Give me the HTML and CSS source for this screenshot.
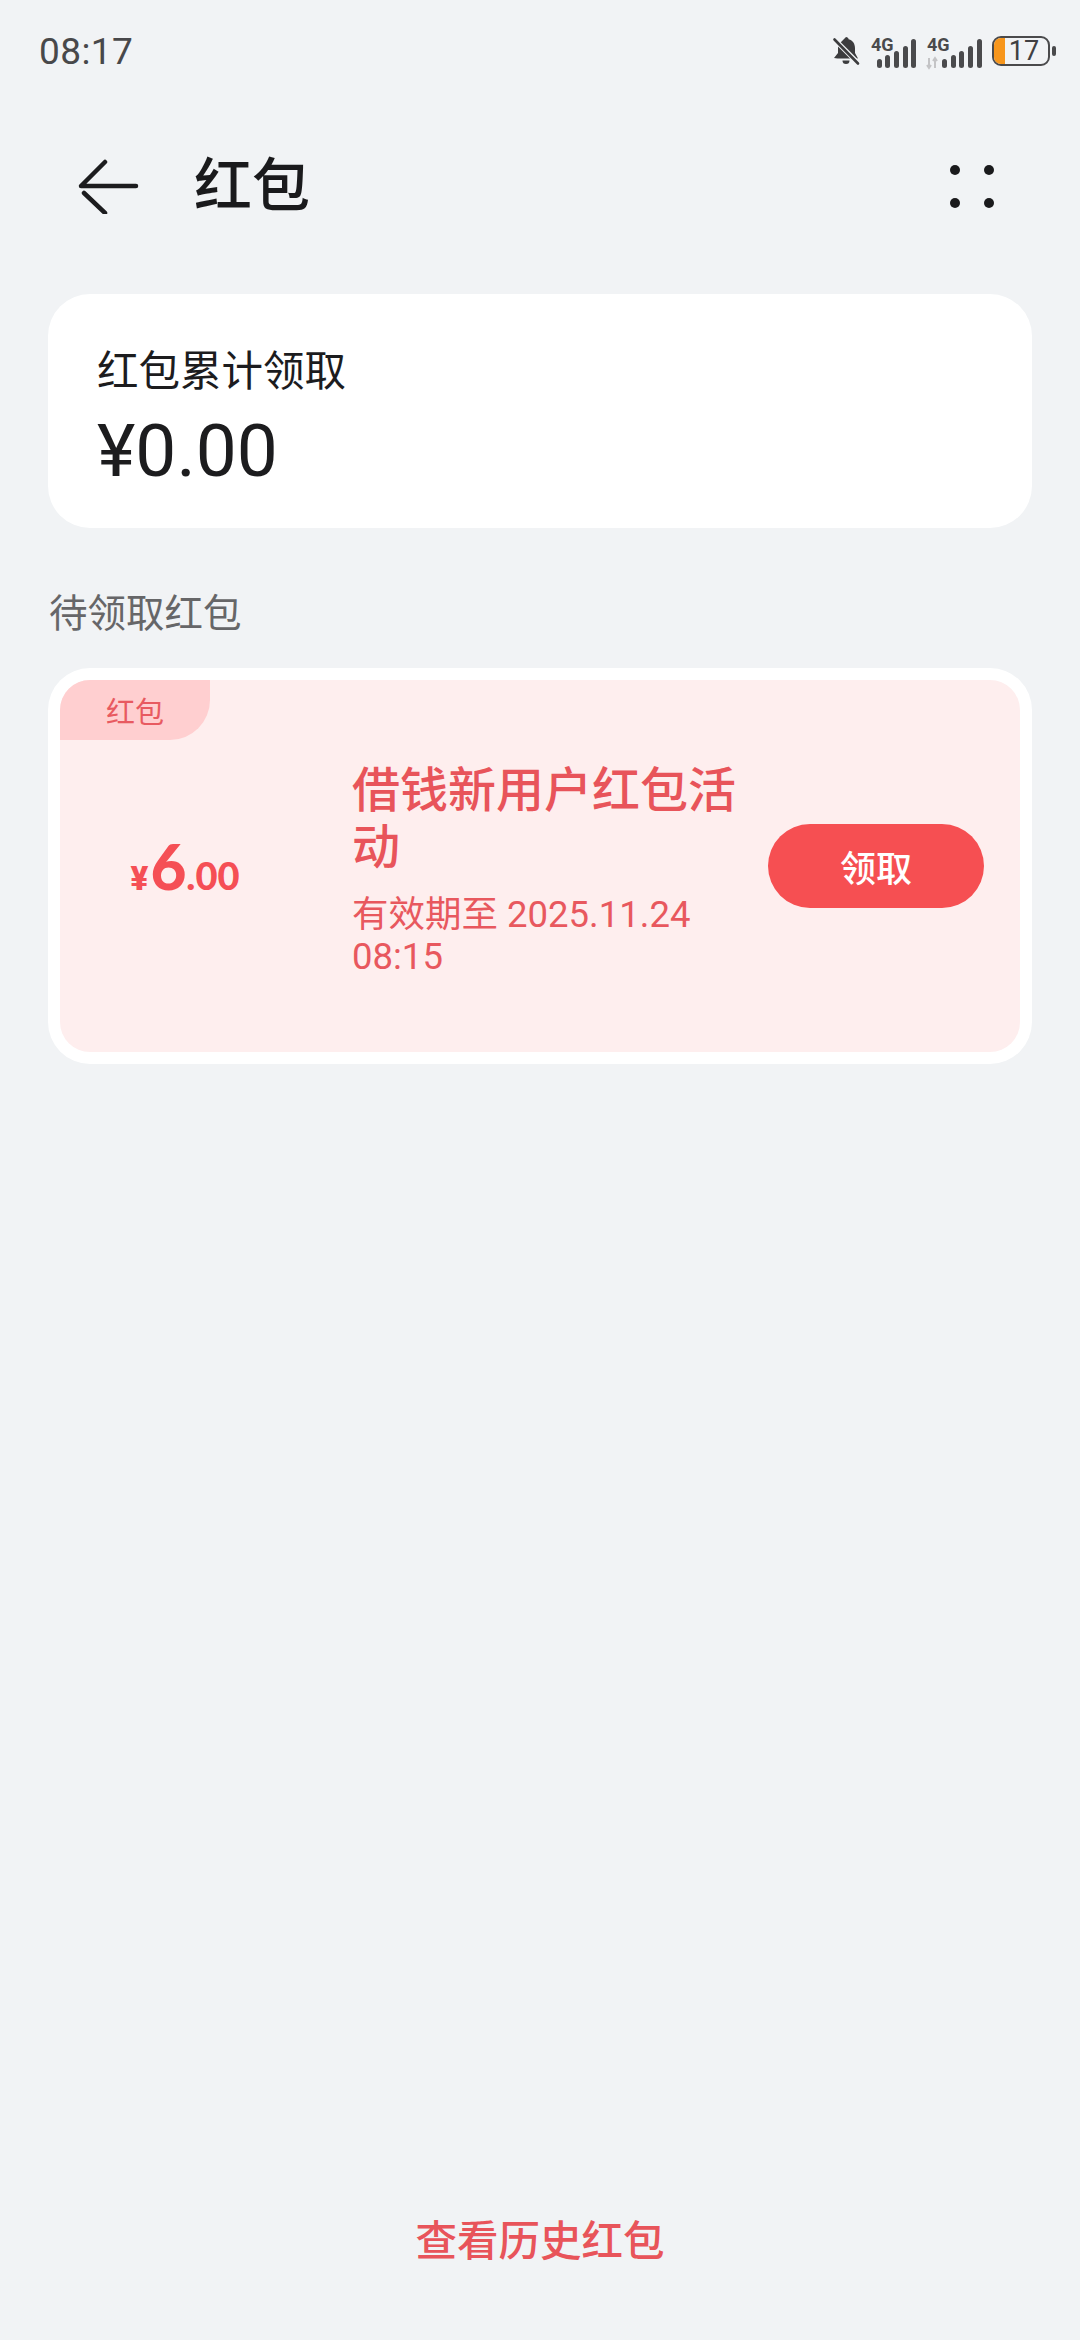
FILE: index.html
```html
<!DOCTYPE html>
<html lang="zh">
<head>
<meta charset="utf-8">
<title>红包</title>
<link rel="stylesheet" href="styles.css">
</head>
<body>
<div class="page">
  <div class="status">
    <span class="time">08:17</span>
    <div class="status-icons">
      <svg class="bell" width="30" height="30" viewBox="0 0 30 30">
        <path d="M15 1c1.500 0 2.400 1 2.600 2.200C22 4.400 24 8 24 12v5l3 5.500H6.500L3 22l4-5v-5c0-1.200.2-2.400.6-3.500z" fill="#3c3c3e"/>
        <path d="M11.500 24.500h7a3.500 3.500 0 0 1-7 0z" fill="#3c3c3e"/>
        <path d="M3 3l24 24" stroke="#f1f3f5" stroke-width="5"/>
        <path d="M3.500 3.500l23.500 24" stroke="#3c3c3e" stroke-width="2.600" stroke-linecap="round"/>
      </svg>
      <svg class="sig" width="45" height="38" viewBox="0 -5 45 38">
        <text x="0" y="14" class="net">4G</text>
        <g fill="#4a4a4c"><rect x="6" y="22" width="5" height="9" rx="2.500"/><rect x="14" y="18" width="5" height="13" rx="2.500"/><rect x="23" y="14" width="5" height="17" rx="2.500"/><rect x="32" y="9" width="5" height="22" rx="2.500"/><rect x="40" y="2" width="5" height="29" rx="2.500"/></g>
      </svg>
      <svg class="sig" width="56" height="38" viewBox="0 -5 56 38">
        <text x="1" y="14" class="net">4G</text>
        <path d="M3 21v10M1 28l2 3 2-3M9 31V21M7 24l2-3 2 3" stroke="#c4c4c6" stroke-width="2" fill="none"/>
        <g fill="#4a4a4c"><rect x="16" y="22" width="5" height="9" rx="2.500"/><rect x="25" y="18" width="5" height="13" rx="2.500"/><rect x="33" y="14" width="5" height="17" rx="2.500"/><rect x="42" y="9" width="5" height="22" rx="2.500"/><rect x="51" y="2" width="5" height="29" rx="2.500"/></g>
      </svg>
      <div class="battery">
        <div class="battery-body"><span class="battery-fill"></span><span class="battery-num">17</span></div>
        <span class="battery-nub"></span>
      </div>
    </div>
  </div>

  <header class="nav">
    <svg class="back" width="62" height="56" viewBox="0 0 62 56">
      <path d="M59 28H4L28 4M7 35l21 20" stroke="#1c1c1e" stroke-width="4.500" fill="none" stroke-linecap="round" stroke-linejoin="round"/>
    </svg>
    <h1 class="title">红包</h1>
    <div class="dots"><i></i><i></i><i></i><i></i></div>
  </header>

  <section class="summary">
    <div class="summary-label">红包累计领取</div>
    <div class="summary-value">¥0.00</div>
  </section>

  <div class="section-title">待领取红包</div>

  <section class="packet">
    <div class="packet-inner">
      <span class="tag">红包</span>
      <div class="amount"><span class="cur">¥</span><span class="int">6</span><span class="dec">.00</span></div>
      <div class="info">
        <div class="info-title">借钱新用户红包活动</div>
        <div class="info-date">有效期至 2025.11.24 08:15</div>
      </div>
      <button class="claim">领取</button>
    </div>
  </section>

  <footer class="history">查看历史红包</footer>
</div>
</body>
</html>
```

FILE: styles.css
```css
* { box-sizing: border-box; }
html, body { margin: 0; padding: 0; }
body {
  width: 1080px;
  height: 2340px;
  background: #f1f3f5;
  font-family: Roboto, "Noto Sans CJK SC", sans-serif;
  overflow: hidden;
}
.page {
  height: 2340px;
  display: flex;
  flex-direction: column;
}
.status {
  height: 102px;
  padding: 0 24px 0 39px;
  display: flex;
  align-items: center;
  justify-content: space-between;
}
.time { font-size: 37px; color: #48484a; letter-spacing: 0.4px; }
.status-icons { display: flex; align-items: center; }
.bell { margin-right: 10px; }
.sig { margin-right: 10px; }
.net { font: 700 18px Roboto, sans-serif; fill: #4a4a4c; }
.battery { display: flex; align-items: center; gap: 2px; }
.battery-body {
  width: 58px;
  height: 30px;
  border: 2px solid #4a4a4c;
  border-radius: 9px;
  position: relative;
  display: flex;
  align-items: center;
  justify-content: center;
  overflow: hidden;
  padding-left: 6px;
}
.battery-fill { position: absolute; left: 0; top: 0; bottom: 0; width: 11px; background: #f7961c; }
.battery-num { font-size: 27px; color: #404042; line-height: 26px; }
.battery-nub { width: 4px; height: 10px; border-radius: 2px; background: #4a4a4c; }

.nav {
  height: 168px;
  padding: 0 0 0 77px;
  display: flex;
  align-items: center;
}
.title {
  margin: 0 0 0 55px;
  font-size: 58px;
  font-weight: 500;
  color: #1a1a1c;
  line-height: 70px;
}
.dots {
  margin-left: auto;
  margin-right: 86px;
  width: 44px;
  display: grid;
  grid-template-columns: 10px 10px;
  justify-content: space-between;
  row-gap: 23px;
}
.dots i { width: 10px; height: 10px; border-radius: 50%; background: #1a1a1c; }

.summary {
  margin: 24px 48px 0;
  height: 234px;
  padding: 50px 50px 0 49px;
  background: #fff;
  border-radius: 42px;
}
.summary-label { font-size: 41.500px; line-height: 56px; color: #1c1c1e; }
.summary-value { font-size: 73px; line-height: 90px; color: #1c1c1e; margin-top: 6px; }

.section-title {
  margin: 61px 48px 0 49px;
  font-size: 38.500px;
  line-height: 50px;
  color: #666668;
}

.packet {
  margin: 29px 48px 0;
  height: 396px;
  padding: 12px;
  background: #fff;
  border-radius: 42px;
}
.packet-inner {
  position: relative;
  height: 100%;
  display: flex;
  align-items: center;
  padding-right: 36px;
  background: #feeeee;
  border-radius: 30px;
  overflow: hidden;
}
.tag {
  position: absolute;
  left: 0;
  top: 0;
  width: 150px;
  height: 60px;
  display: flex;
  align-items: center;
  justify-content: center;
  background: #ffcfd0;
  border-bottom-right-radius: 40px;
  font-size: 29px;
  color: #e85a60;
}
.amount {
  width: 250px;
  flex: none;
  display: flex;
  align-items: baseline;
  justify-content: center;
  color: #f54f55;
  font-family: Lato, sans-serif;
  font-weight: 900;
  line-height: 1;
}
.cur { font-family: Roboto, sans-serif; font-size: 33px; margin-right: 2px; }
.int { font-size: 62px; }
.dec { font-size: 38px; }
.info {
  width: 416px;
  flex: none;
  margin-left: 42px;
  padding: 8px 16px 0 0;
}
.info-title {
  font-size: 48px;
  line-height: 57px;
  font-weight: 500;
  color: #e8545a;
}
.info-date {
  margin-top: 18px;
  font-size: 36.500px;
  line-height: 42px;
  color: #e8585e;
}
.claim {
  width: 216px;
  height: 84px;
  flex: none;
  margin-left: auto;
  padding: 0;
  border: 0;
  border-radius: 42px;
  background: #f64f52;
  color: #fff;
  font-family: inherit;
  font-size: 36px;
  font-weight: 500;
}
.history {
  margin-top: auto;
  margin-bottom: 73px;
  text-align: center;
  font-size: 41.500px;
  line-height: 50px;
  font-weight: 500;
  color: #e8545a;
}
```
